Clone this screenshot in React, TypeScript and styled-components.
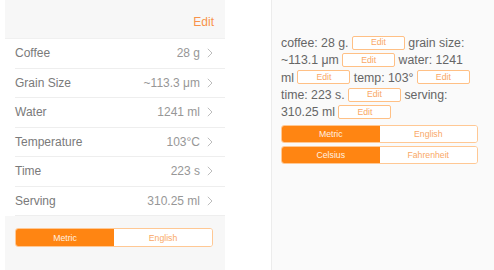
import React from "react";
import styled, { createGlobalStyle } from "styled-components";

const Global = createGlobalStyle`
  html, body { margin: 0; padding: 0; background: #ffffff; }
  body { font-family: "Liberation Sans", Arial, sans-serif; -webkit-font-smoothing: antialiased; }
`;

const Page = styled.div`
  display: flex;
  width: 494px;
  height: 270px;
  overflow: hidden;
  background: #ffffff;
`;

const LeftPanel = styled.div`
  margin-left: 5px;
  width: 220px;
  height: 270px;
  background: #f7f7f7;
  display: flex;
  flex-direction: column;
`;

const Header = styled.div`
  height: 38px;
  display: flex;
  align-items: center;
  justify-content: flex-end;
  padding-right: 11px;
  box-sizing: border-box;
`;

const HeaderEdit = styled.span`
  color: #f8934a;
  font-size: 12px;
  margin-top: 6px;
`;

const List = styled.div`
  background: #ffffff;
  border-top: 1px solid #f0f0f0;
`;

const Row = styled.div`
  height: 29.5px;
  margin-left: 10px;
  padding-right: 12px;
  display: flex;
  align-items: center;
  border-bottom: 1px solid #eeeeee;
  box-sizing: border-box;
  font-size: 12px;
`;

const Label = styled.span`
  flex: 1;
  color: #7a7a7a;
`;

const Value = styled.span`
  color: #979797;
  margin-right: 7px;
`;

const Chevron = () => (
  <svg width="6" height="10" viewBox="0 0 6 10">
    <polyline points="0.8,0.8 5,5 0.8,9.2" fill="none" stroke="#bdbdbd" strokeWidth="1" />
  </svg>
);

const Segmented = styled.div<{ $width: number; $height: number }>`
  display: flex;
  width: ${(p) => p.$width}px;
  height: ${(p) => p.$height}px;
  border: 1px solid #ffc894;
  border-radius: 3px;
  box-sizing: border-box;
  overflow: hidden;
  background: #ffffff;
`;

const Option = styled.div<{ $active?: boolean }>`
  flex: 1;
  display: flex;
  align-items: center;
  justify-content: center;
  font-size: 8.7px;
  background: ${(p) => (p.$active ? "#ff8512" : "#ffffff")};
  color: ${(p) => (p.$active ? "#fff1e2" : "#f9a866")};
`;

const LeftSegWrap = styled.div`
  margin-top: 12px;
  padding-left: 10px;
`;

const RightPanel = styled.div`
  margin-left: 46px;
  flex: 1;
  height: 270px;
  background: #fafafa;
  border-left: 1px solid #ececec;
  padding: 35px 0 0 9px;
  box-sizing: border-box;
`;

const Para = styled.div`
  width: 198px;
  font-size: 12.3px;
  line-height: 17.3px;
  color: #666666;
`;

const EditButton = styled.span`
  display: inline-flex;
  align-items: center;
  justify-content: center;
  width: 53px;
  height: 14px;
  box-sizing: border-box;
  border: 1px solid #ffc085;
  border-radius: 2px;
  background: #ffffff;
  color: #f9a866;
  font-size: 8.7px;
  line-height: 1;
  vertical-align: middle;
  position: relative;
  top: -1px;
`;

const SegStack = styled.div`
  margin-top: 4px;
  display: flex;
  flex-direction: column;
  gap: 3px;
`;

const rows = [
  ["Coffee", "28 g"],
  ["Grain Size", "~113.3 μm"],
  ["Water", "1241 ml"],
  ["Temperature", "103°C"],
  ["Time", "223 s"],
  ["Serving", "310.25 ml"],
];

export default function App() {
  return (
    <>
      <Global />
      <Page>
        <LeftPanel>
          <Header>
            <HeaderEdit>Edit</HeaderEdit>
          </Header>
          <List>
            {rows.map(([l, v]) => (
              <Row key={l}>
                <Label>{l}</Label>
                <Value>{v}</Value>
                <Chevron />
              </Row>
            ))}
          </List>
          <LeftSegWrap>
            <Segmented $width={198} $height={19}>
              <Option $active>Metric</Option>
              <Option>English</Option>
            </Segmented>
          </LeftSegWrap>
        </LeftPanel>
        <RightPanel>
          <Para>
            coffee: 28 g. <EditButton>Edit</EditButton> grain size: ~113.1 μm <EditButton>Edit</EditButton> water: 1241
            ml <EditButton>Edit</EditButton> temp: 103° <EditButton>Edit</EditButton> time: 223 s.{" "}
            <EditButton>Edit</EditButton> serving: 310.25 ml <EditButton>Edit</EditButton>
          </Para>
          <SegStack>
            <Segmented $width={197} $height={18}>
              <Option $active>Metric</Option>
              <Option>English</Option>
            </Segmented>
            <Segmented $width={197} $height={18}>
              <Option $active>Celsius</Option>
              <Option>Fahrenheit</Option>
            </Segmented>
          </SegStack>
        </RightPanel>
      </Page>
    </>
  );
}
